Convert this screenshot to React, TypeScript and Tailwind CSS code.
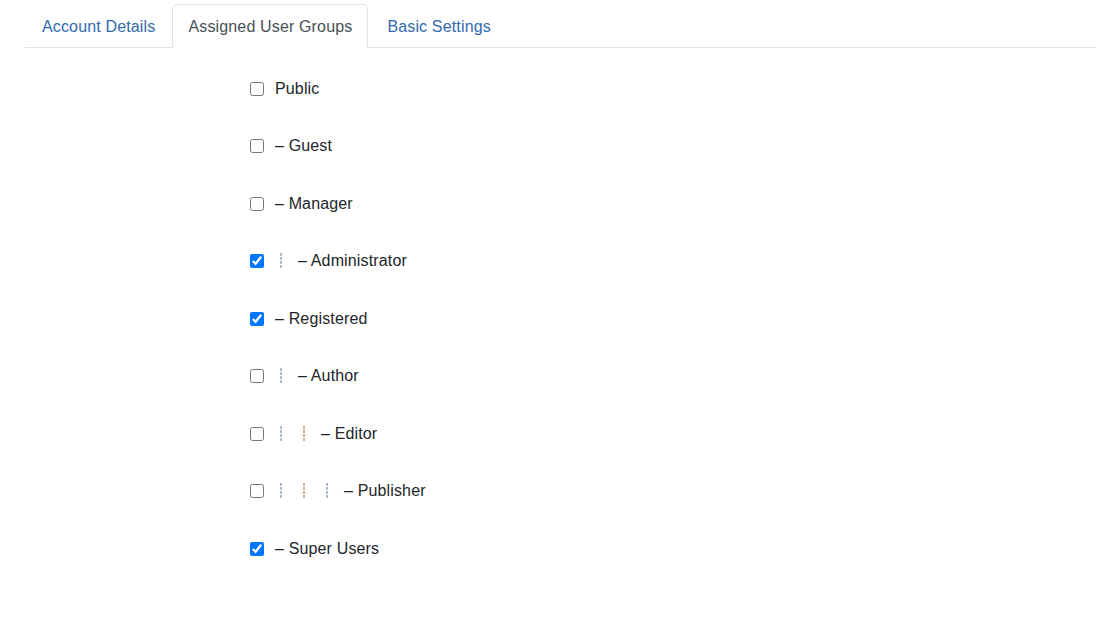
import React from "react";

type Group = { label: string; level: number; checked: boolean; dash: boolean };

const groups: Group[] = [
  { label: "Public", level: 0, checked: false, dash: false },
  { label: "Guest", level: 0, checked: false, dash: true },
  { label: "Manager", level: 0, checked: false, dash: true },
  { label: "Administrator", level: 1, checked: true, dash: true },
  { label: "Registered", level: 0, checked: true, dash: true },
  { label: "Author", level: 1, checked: false, dash: true },
  { label: "Editor", level: 2, checked: false, dash: true },
  { label: "Publisher", level: 3, checked: false, dash: true },
  { label: "Super Users", level: 0, checked: true, dash: true },
];

function Guide({ idx }: { idx: number }) {
  const cls =
    idx % 2 === 1
      ? "bg-[repeating-linear-gradient(to_bottom,#d4ad95_0px,#d4ad95_3px,transparent_3px,transparent_4px)]"
      : "bg-[repeating-linear-gradient(to_bottom,#aebbcc_0px,#aebbcc_3px,transparent_3px,transparent_4px)]";
  return (
    <span className="w-[23px] h-[16px] flex shrink-0">
      <span className={`ml-[5px] w-[2px] h-[16px] ${cls}`} />
    </span>
  );
}

export default function App() {
  return (
    <div className="w-[1096px] h-[637px] bg-white font-['Liberation_Sans',Arial,sans-serif] text-[16px] tracking-[0.15px] overflow-hidden">
      <div className="pt-[4px] pl-[25px]">
        <div className="flex border-b border-[#dee2e6] h-[44px]">
          <div className="px-[16px] pt-[2px] h-[43px] flex items-center text-[#3269ad] border border-transparent">
            Account Details
          </div>
          <div className="px-[15px] pt-[2px] h-[44px] -mb-px flex items-center text-[#495057] bg-white border border-[#dee2e6] border-b-white rounded-t-[5px]">
            Assigned User Groups
          </div>
          <div className="px-[18px] pt-[2px] h-[43px] flex items-center text-[#3269ad] border border-transparent">
            Basic Settings
          </div>
        </div>
      </div>
      <div className="pl-[250px] pt-[12px] flex flex-col">
        {groups.map((g) => (
          <div key={g.label} className="h-[57.5px] flex items-center">
            <input
              type="checkbox"
              defaultChecked={g.checked}
              className="m-0 w-[14px] h-[14px] accent-[#0075ff] shrink-0"
            />
            <span className="ml-[11px] flex items-center text-[#212529] leading-[24px]">
              {Array.from({ length: g.level }).map((_, i) => (
                <Guide key={i} idx={i} />
              ))}
              <span>{g.dash ? "\u2013 " + g.label : g.label}</span>
            </span>
          </div>
        ))}
      </div>
    </div>
  );
}
